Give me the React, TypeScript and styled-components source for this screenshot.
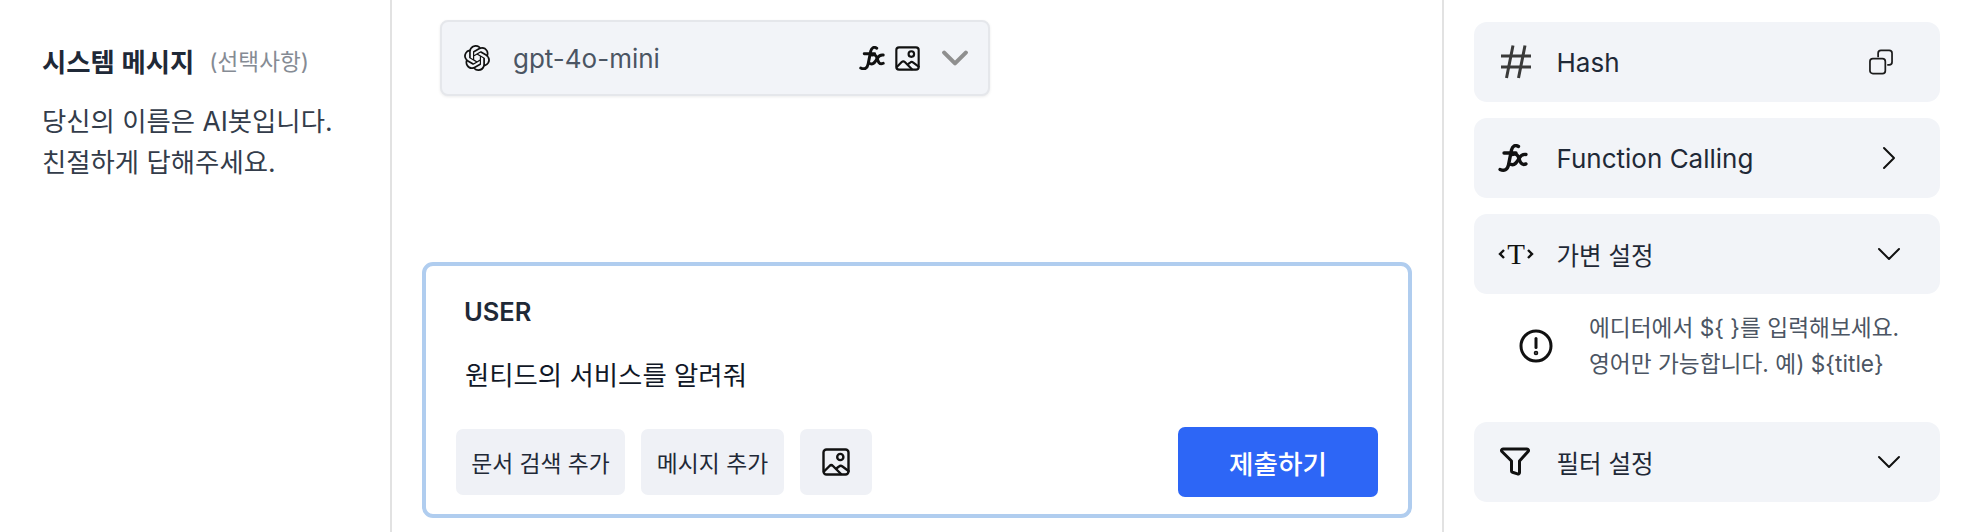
import styled, { createGlobalStyle } from "styled-components";
import { SiOpenai } from "react-icons/si";

const GlobalStyle = createGlobalStyle`
  html, body {
    margin: 0;
    height: 532px;
    overflow: hidden;
    background: #fff;
  }
  * {
    box-sizing: border-box;
  }
  body {
    font-family: Inter, "Noto Sans CJK KR", sans-serif;
    color: #1f2937;
  }
`;

const Page = styled.div`
  display: grid;
  grid-template-columns: 392px 1052px 1fr;
  height: 532px;
`;

const SystemPanel = styled.aside`
  border-right: 2px solid #e2e2e2;
  padding: 42px 0 0 42px;
`;

const SystemTitleRow = styled.div`
  display: flex;
  align-items: center;
  gap: 15px;
  height: 36px;
`;

const SystemTitle = styled.span`
  font-size: 26.4px;
  font-weight: 600;
  color: #1f2937;
`;

const Optional = styled.span`
  font-size: 22.6px;
  color: #858b94;
`;

const SystemText = styled.p`
  margin: 23px 0 0;
  font-size: 26.4px;
  line-height: 41px;
  color: #333c4a;
`;

const CenterPanel = styled.main`
  border-right: 2px solid #e2e2e2;
  display: flex;
  flex-direction: column;
  justify-content: space-between;
  padding: 20px 30px 14px 30px;
`;

const ModelSelect = styled.div`
  width: 550px;
  height: 76px;
  margin-left: 18px;
  display: flex;
  align-items: center;
  padding: 0 20px 0 22px;
  background: #f2f4f8;
  border: 2px solid #e5e7eb;
  border-radius: 8px;
  box-shadow: 0 1px 3px rgba(0, 0, 0, 0.08);
`;

const ModelName = styled.span`
  flex: 1;
  margin-left: 23px;
  font-size: 26px;
  color: #4b5563;
`;

const ModelBadges = styled.div`
  display: flex;
  align-items: center;
  gap: 10px;
  margin-right: 22px;
`;

const PromptBox = styled.form`
  height: 256px;
  width: 990px;
  border: 4px solid #b0cdef;
  border-radius: 11px;
  padding: 31px 30px 17px 30px;
  display: flex;
  flex-direction: column;
`;

const RoleLabel = styled.div`
  font-size: 25.5px;
  line-height: 30px;
  font-weight: 600;
  color: #1f2937;
  margin-left: 8px;
`;

const PromptText = styled.div`
  margin: 30px 0 0 9px;
  font-size: 26.4px;
  line-height: 36px;
  color: #111827;
`;

const PromptActions = styled.div`
  margin-top: auto;
  display: flex;
  align-items: center;
  gap: 16px;
`;

const ActionButton = styled.button<{ $width: number }>`
  width: ${(p) => p.$width}px;
  height: 66px;
  padding: 0;
  border: none;
  border-radius: 7px;
  background: #eff1f6;
  display: flex;
  align-items: center;
  justify-content: center;
  font-family: inherit;
  font-size: 22.8px;
  color: #1f2937;
`;

const SubmitButton = styled.button`
  margin-left: auto;
  width: 200px;
  height: 70px;
  border: none;
  border-radius: 7px;
  background: #2d66f6;
  color: #fff;
  font-family: inherit;
  font-size: 26.6px;
  font-weight: 500;
`;

const SidePanel = styled.aside`
  padding: 22px 24px 0 30px;
  display: flex;
  flex-direction: column;
  gap: 16px;
`;

const SideCard = styled.div`
  height: 80px;
  padding: 0 39px 0 24px;
  display: flex;
  align-items: center;
  background: #f2f4f8;
  border-radius: 13px;
`;

const CardIcon = styled.div`
  width: 58.5px;
  flex: none;
  display: flex;
  align-items: center;
`;

const CardLabel = styled.span<{ $size?: number }>`
  flex: 1;
  font-size: ${(p) => p.$size ?? 26}px;
  color: #1f2937;
`;

const CardTrail = styled.div<{ $shift?: number }>`
  width: 24px;
  display: flex;
  justify-content: center;
  margin-right: ${(p) => p.$shift ?? 0}px;
`;

const TokenMark = styled.div`
  display: flex;
  align-items: center;
  justify-content: space-between;
  width: 36px;
`;

const TokenLetter = styled.span`
  font-family: "Liberation Serif", serif;
  font-size: 29px;
  line-height: 1;
  color: #111;
`;

const VariableHint = styled.div`
  display: flex;
  align-items: center;
  gap: 36px;
  padding: 0 0 24px 45px;
`;

const HintText = styled.div`
  font-size: 22.7px;
  line-height: 36px;
  white-space: nowrap;
  color: #4b5563;
`;

function ImageIcon({ size }: { size: number }) {
  return (
    <svg width={size} height={size} viewBox="0 0 28 28" fill="none" stroke="#111" strokeWidth="2.4" strokeLinejoin="round" strokeLinecap="round">
      <rect x="1.5" y="1.5" width="25" height="25" rx="3" />
      <circle cx="18.3" cy="9" r="3.1" />
      <path d="M2 23.5l5.5-5.5c1-1 2.5-1 3.5 0l8 8" />
      <path d="M15 20l2-1.5c1-.8 2.5-.7 3.5 0l6 4.5" />
    </svg>
  );
}

function FxIcon({ size }: { size: number }) {
  return (
    <svg width={size} height={size * 0.93} viewBox="0 0 30 28" fill="none" stroke="#111" strokeWidth="3.4" strokeLinecap="round">
      <path d="M20.5 2.5C17 .5 14.5 2 13.5 6L10.5 21C9.5 26 6 27.5 2 25.5" />
      <path d="M6 9h12" />
      <path d="M15 10.5c3.5-1 5 .5 6 4s2.5 7.5 7 5.5" />
      <path d="M28 10.5c-3-.5-5 .5-7 4s-4 7.5-8 6" />
    </svg>
  );
}

function Chevron({ dir, size, color, width }: { dir: "down" | "right"; size: number; color: string; width: number }) {
  return (
    <svg width={size} height={size} viewBox="0 0 24 24" fill="none" stroke={color} strokeWidth={width} strokeLinecap="round" strokeLinejoin="round">
      {dir === "down" ? <path d="M2 7l10 10L22 7" /> : <path d="M7 2l10 10L7 22" />}
    </svg>
  );
}

function HashIcon() {
  return (
    <svg width="33" height="34" viewBox="-3 0 33 34" fill="none" stroke="#3a3a3a" strokeWidth="3">
      <path d="M0 11h30M0 22h30" />
      <path d="M12 .5L5.5 33M24 .5L17.5 33" />
    </svg>
  );
}

function CopyIcon() {
  return (
    <svg width="25" height="26" viewBox="0 0 25 26" fill="none" stroke="#1c1c1c" strokeWidth="1.8">
      <rect x="1" y="9.5" width="16" height="15.5" rx="3" />
      <path d="M9.5 8V4a3 3 0 0 1 3-3h8.5a3 3 0 0 1 3 3v9a3 3 0 0 1-3 3h-2" />
    </svg>
  );
}

function AlertIcon() {
  return (
    <svg width="34" height="34" viewBox="0 0 34 34" fill="none" stroke="#111" strokeWidth="3" strokeLinecap="round">
      <circle cx="17" cy="17" r="15" />
      <path d="M17 9.5v9" />
      <circle cx="17" cy="24" r="0.8" fill="#111" />
    </svg>
  );
}

function FilterIcon() {
  return (
    <svg width="32" height="30" viewBox="-2 0 32 30" fill="none" stroke="#111" strokeWidth="3" strokeLinejoin="round">
      <path d="M3 2h24a1.5 1.5 0 0 1 1.1 2.5L19.5 14v11.5a1.5 1.5 0 0 1-2 1.4l-5-1.6a1.5 1.5 0 0 1-1-1.4V14L1.9 4.5A1.5 1.5 0 0 1 3 2z" />
    </svg>
  );
}

function AngleIcon({ flip }: { flip?: boolean }) {
  return (
    <svg width="7" height="10" viewBox="0 0 7 10" fill="none" stroke="#111" strokeWidth="2.4">
      <path d={flip ? "M1 1l4 4-4 4" : "M6 1L2 5l4 4"} />
    </svg>
  );
}

export default function App() {
  return (
    <Page>
      <GlobalStyle />
      <SystemPanel>
        <SystemTitleRow>
          <SystemTitle>시스템 메시지</SystemTitle>
          <Optional>(선택사항)</Optional>
        </SystemTitleRow>
        <SystemText>
          당신의 이름은 AI봇입니다.
          <br />
          친절하게 답해주세요.
        </SystemText>
      </SystemPanel>

      <CenterPanel>
        <ModelSelect>
          <SiOpenai size={26} color="#111" />
          <ModelName>gpt-4o-mini</ModelName>
          <ModelBadges>
            <FxIcon size={26} />
            <ImageIcon size={25} />
          </ModelBadges>
          <Chevron dir="down" size={26} color="#8f8f8f" width={3.8} />
        </ModelSelect>

        <PromptBox>
          <RoleLabel>USER</RoleLabel>
          <PromptText>원티드의 서비스를 알려줘</PromptText>
          <PromptActions>
            <ActionButton type="button" $width={169}>문서 검색 추가</ActionButton>
            <ActionButton type="button" $width={143}>메시지 추가</ActionButton>
            <ActionButton type="button" $width={72}>
              <ImageIcon size={28} />
            </ActionButton>
            <SubmitButton type="button">제출하기</SubmitButton>
          </PromptActions>
        </PromptBox>
      </CenterPanel>

      <SidePanel>
        <SideCard>
          <CardIcon>
            <HashIcon />
          </CardIcon>
          <CardLabel>Hash</CardLabel>
          <CardTrail $shift={8}>
            <CopyIcon />
          </CardTrail>
        </SideCard>
        <SideCard>
          <CardIcon>
            <FxIcon size={30} />
          </CardIcon>
          <CardLabel>Function Calling</CardLabel>
          <CardTrail>
            <Chevron dir="right" size={24} color="#111" width={2} />
          </CardTrail>
        </SideCard>
        <SideCard>
          <CardIcon>
            <TokenMark>
              <AngleIcon />
              <TokenLetter>T</TokenLetter>
              <AngleIcon flip />
            </TokenMark>
          </CardIcon>
          <CardLabel $size={24.5}>가변 설정</CardLabel>
          <CardTrail>
            <Chevron dir="down" size={24} color="#111" width={2} />
          </CardTrail>
        </SideCard>
        <VariableHint>
          <AlertIcon />
          <HintText>
            에디터에서 {"${ }"}를 입력해보세요.
            <br />
            영어만 가능합니다. 예) {"${title}"}
          </HintText>
        </VariableHint>
        <SideCard>
          <CardIcon>
            <FilterIcon />
          </CardIcon>
          <CardLabel $size={24.5}>필터 설정</CardLabel>
          <CardTrail>
            <Chevron dir="down" size={24} color="#111" width={2} />
          </CardTrail>
        </SideCard>
      </SidePanel>
    </Page>
  );
}
